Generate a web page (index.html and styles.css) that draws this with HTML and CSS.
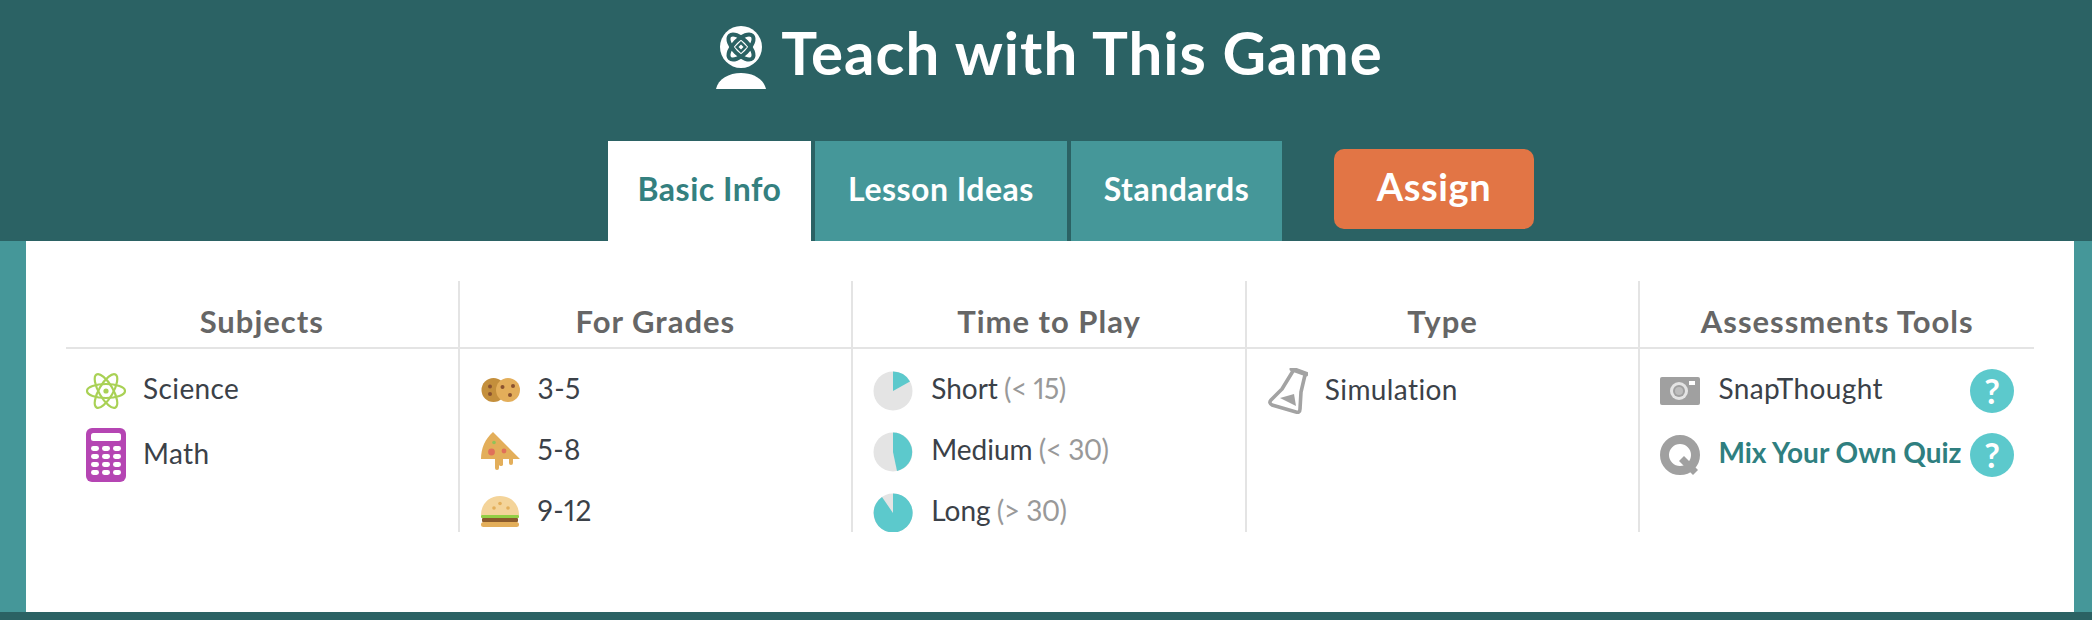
FILE: index.html
```html
<!DOCTYPE html>
<html lang="en">
<head>
  <meta charset="UTF-8">
  <title>Teach with This Game</title>
  <link rel="stylesheet" href="styles.css">
</head>
<body>
  <header class="top">
    <h1 class="title">
      <svg class="logo" viewBox="0 0 50 60">
        <circle cx="25" cy="18" r="21" fill="#fff"/>
        <g fill="none" stroke="#2b6264" stroke-width="4">
          <ellipse cx="25" cy="18" rx="16" ry="7.5" transform="rotate(45 25 18)"/>
          <ellipse cx="25" cy="18" rx="16" ry="7.5" transform="rotate(-45 25 18)"/>
        </g>
        <path d="M25 12l6 6-6 6-6-6z" fill="#2b6264"/>
        <path d="M25 15.500l2.500 2.500-2.500 2.500-2.500-2.500z" fill="#fff"/>
        <path d="M0 60C2 50 13 44 25 44s23 6 25 16z" fill="#fff"/>
      </svg>
      Teach with This Game
    </h1>
    <nav class="tabs">
      <a class="tab active">Basic Info</a>
      <a class="tab tab-lesson">Lesson Ideas</a>
      <a class="tab tab-standards">Standards</a>
      <a class="assign">Assign</a>
    </nav>
  </header>

  <div class="band">
    <main class="panel">
      <section class="col">
        <h2>Subjects</h2>
        <ul>
          <li>
            <svg class="ico" viewBox="0 0 40 40" fill="none" stroke="#a9d155" stroke-width="2.2">
              <ellipse cx="20" cy="20" rx="19" ry="7"/>
              <ellipse cx="20" cy="20" rx="19" ry="7" transform="rotate(60 20 20)"/>
              <ellipse cx="20" cy="20" rx="19" ry="7" transform="rotate(-60 20 20)"/>
              <circle cx="20" cy="20" r="2.6" fill="#a9d155" stroke="none"/>
            </svg>
            <span>Science</span>
          </li>
          <li class="row-math">
            <svg class="ico ico-tall" viewBox="0 0 40 54">
              <rect width="40" height="54" rx="6" fill="#b545b3"/>
              <rect x="5" y="5" width="30" height="8" rx="2.5" fill="#fff"/>
              <g fill="#fff">
                <rect x="5" y="18" width="8" height="5" rx="2.4"/><rect x="16" y="18" width="8" height="5" rx="2.4"/><rect x="27" y="18" width="8" height="5" rx="2.4"/>
                <rect x="5" y="26" width="8" height="5" rx="2.4"/><rect x="16" y="26" width="8" height="5" rx="2.4"/><rect x="27" y="26" width="8" height="5" rx="2.4"/>
                <rect x="5" y="34" width="8" height="5" rx="2.4"/><rect x="16" y="34" width="8" height="5" rx="2.4"/><rect x="27" y="34" width="8" height="5" rx="2.4"/>
                <rect x="5" y="42" width="8" height="5" rx="2.4"/><rect x="16" y="42" width="8" height="5" rx="2.4"/><rect x="27" y="42" width="8" height="5" rx="2.4"/>
              </g>
            </svg>
            <span>Math</span>
          </li>
        </ul>
      </section>

      <section class="col">
        <h2>For Grades</h2>
        <ul>
          <li>
            <svg class="ico" viewBox="0 0 40 40">
              <circle cx="12.5" cy="19" r="12" fill="#c48f3c"/>
              <circle cx="27" cy="19" r="12" fill="#e3ae5a"/>
              <g fill="#8a5230">
                <circle cx="9" cy="15.500" r="2"/><circle cx="9" cy="23" r="2"/>
                <circle cx="21.500" cy="16" r="2"/><circle cx="32" cy="15" r="2"/><circle cx="29" cy="24" r="2"/>
              </g>
            </svg>
            <span>3-5</span>
          </li>
          <li>
            <svg class="ico" viewBox="0 0 40 40">
              <path d="M12 0L39 27H32v4a2 2 0 0 1-4 0v-4h-6v6a2 2 0 0 1-2 1 2 2 0 0 1-2-1v-3l-2-3H0C0 16 4 7 12 0z" fill="#e3ae5a"/>
              <path d="M14 27h4v9a2 2 0 0 1-4 0z" fill="#e3ae5a"/>
              <circle cx="10.500" cy="20" r="3.400" fill="#e0705a"/>
              <circle cx="23" cy="19" r="2.400" fill="#e0705a"/>
              <circle cx="13" cy="10.500" r="1.800" fill="#8fc35a"/>
            </svg>
            <span>5-8</span>
          </li>
          <li>
            <svg class="ico" viewBox="0 0 40 40">
              <path d="M0 22C0 11 8 3 19 3s19 8 19 19z" fill="#f4d49a"/>
              <g fill="#e3ae5a"><circle cx="13" cy="15" r="1.800"/><circle cx="19" cy="10.500" r="1.800"/><circle cx="27" cy="15" r="1.800"/></g>
              <rect y="22" width="38" height="3" rx="1" fill="#93cf45"/>
              <rect x="1" y="25" width="36" height="4" rx="1" fill="#8a5a2c"/>
              <rect y="29" width="38" height="5" rx="2.500" fill="#e3ae5a"/>
            </svg>
            <span>9-12</span>
          </li>
        </ul>
      </section>

      <section class="col col-time">
        <h2>Time to Play</h2>
        <ul>
          <li>
            <svg class="ico" viewBox="0 0 40 40">
              <circle cx="20" cy="20" r="19.500" fill="#e4e4e4"/>
              <path d="M20 20V.5A19.500 19.500 0 0 1 37 10.500z" fill="#5cc9cc"/>
            </svg>
            <span>Short <em>(&lt; 15)</em></span>
          </li>
          <li>
            <svg class="ico" viewBox="0 0 40 40">
              <circle cx="20" cy="20" r="19.500" fill="#e4e4e4"/>
              <path d="M20 20V.5A19.500 19.500 0 0 1 24 39z" fill="#5cc9cc"/>
            </svg>
            <span>Medium <em>(&lt; 30)</em></span>
          </li>
          <li>
            <svg class="ico" viewBox="0 0 40 40">
              <circle cx="20" cy="20" r="19.500" fill="#e4e4e4"/>
              <path d="M20 20V.5A19.500 19.500 0 1 1 9 4z" fill="#5cc9cc"/>
            </svg>
            <span>Long <em>(&gt; 30)</em></span>
          </li>
        </ul>
      </section>

      <section class="col">
        <h2>Type</h2>
        <ul>
          <li class="row-type">
            <svg class="ico" viewBox="0 0 40 46">
              <path d="M25 3L14 21 3 32c-2 2-1 4 1 5l24 7c2 1 4 0 4-3l1-17 4-17" fill="none" stroke="#a3a3a3" stroke-width="3.600" stroke-linejoin="round"/>
              <path d="M24 1l14 5" stroke="#a3a3a3" stroke-width="5" stroke-linecap="round"/>
              <path d="M12 30l14-4 2 12z" fill="#a3a3a3"/>
            </svg>
            <span>Simulation</span>
          </li>
        </ul>
      </section>

      <section class="col col-tools">
        <h2>Assessments Tools</h2>
        <ul>
          <li>
            <svg class="ico" viewBox="0 0 40 40">
              <rect y="6" width="40" height="28" rx="2" fill="#a0a0a0"/>
              <circle cx="19" cy="20" r="9" fill="#e4e4e4"/>
              <circle cx="19" cy="20" r="6" fill="#a0a0a0"/>
              <circle cx="19" cy="20" r="4" fill="#bdbdbd"/>
              <rect x="29" y="10" width="6" height="4" fill="#fff"/>
            </svg>
            <span>SnapThought</span>
            <b class="help">?</b>
          </li>
          <li>
            <svg class="ico" viewBox="0 0 40 40">
              <circle cx="20" cy="20" r="15.500" fill="none" stroke="#a0a0a0" stroke-width="9"/>
              <path d="M19 26l5-5 14 14-5 5z" fill="#a0a0a0"/>
            </svg>
            <span class="quiz">Mix Your Own Quiz</span>
            <b class="help">?</b>
          </li>
        </ul>
      </section>
    </main>
  </div>
</body>
</html>
```

FILE: styles.css
```css
/* page */
* {
  box-sizing: border-box;
}
body {
  margin: 0;
  height: 620px;
  overflow: hidden;
  background-color: #2b6264;
  font-family: 'Lato', 'Liberation Sans', sans-serif;
  font-variant-numeric: proportional-nums;
  color: #3b4148;
}

/* header */
.top {
  height: 241px;
}
.title {
  display: flex;
  justify-content: center;
  align-items: center;
  gap: 15px;
  height: 141px;
  margin: 0;
  padding: 0 0 37px 7px;
  font-size: 60px;
  font-weight: 700;
  letter-spacing: 1px;
  color: #fff;
}
.logo {
  width: 50px;
  height: 60px;
  overflow: visible;
  margin-top: 13px;
}
.tabs {
  display: flex;
  justify-content: center;
  gap: 4px;
  height: 100px;
  padding-left: 50px;
}
.tab {
  width: 203px;
  height: 100px;
  padding-bottom: 5px;
  line-height: 95px;
  text-align: center;
  font-size: 32px;
  font-weight: 700;
  letter-spacing: 0.5px;
  color: #fff;
  background-color: #459799;
}
.tab-lesson {
  width: 252px;
}
.tab-standards {
  width: 211px;
}
.tab.active {
  background-color: #fff;
  color: #34807f;
}
.assign {
  width: 200px;
  height: 80px;
  margin: 8px 0 0 48px;
  line-height: 74px;
  text-align: center;
  font-size: 38px;
  font-weight: 700;
  letter-spacing: 0.6px;
  color: #fff;
  background-color: #e27545;
  border-radius: 10px;
}

/* panel */
.band {
  height: 371px;
  padding: 0 18px 0 26px;
  background-color: #459799;
}
.panel {
  display: grid;
  grid-template-columns: repeat(5, 1fr);
  height: 100%;
  padding: 40px;
  background-color: #fff;
}
.col {
  height: 251px;
  border-right: 2px solid #e4e4e4;
  overflow: hidden;
}
.col:last-child {
  border-right: none;
}
.col h2 {
  margin: 0;
  height: 68px;
  padding-top: 21px;
  line-height: 38px;
  text-align: center;
  font-size: 31px;
  font-weight: 700;
  letter-spacing: 1px;
  color: #666;
  border-bottom: 2px solid #e4e4e4;
}
.col ul {
  list-style: none;
  margin: 0;
  padding: 22px 20px 0 21px;
}
.col:first-child ul {
  padding-left: 20px;
}
.col li {
  display: flex;
  align-items: center;
  min-height: 40px;
  margin-bottom: 21px;
  font-size: 28px;
  line-height: 30px;
  letter-spacing: 0.4px;
}
.col li span {
  padding-bottom: 7px;
}
.ico {
  flex: none;
  width: 40px;
  height: 40px;
  margin-right: 17px;
}
.ico-tall {
  height: 54px;
}
.col em {
  margin-left: -1px;
  font-style: normal;
  letter-spacing: -0.5px;
  color: #999;
}
.row-math {
  margin-top: -4px;
}
.col .row-math span {
  padding-bottom: 4px;
}
.row-type .ico {
  height: 46px;
  margin-top: -3px;
}
.col-time ul {
  padding-left: 20px;
}
.col-time li {
  letter-spacing: 0;
}
.col-time .ico {
  margin-right: 18px;
}
.col-tools ul {
  padding: 20px 20px 0;
}
.col-tools .ico {
  margin-right: 18px;
}
.col-tools li {
  margin-bottom: 20px;
}
.col .quiz {
  font-weight: 700;
  letter-spacing: 0;
  color: #2f7f80;
  white-space: nowrap;
}
.help {
  flex: none;
  width: 44px;
  height: 44px;
  margin-left: auto;
  border-radius: 50%;
  background-color: #5cc9cc;
  color: #fff;
  font-size: 34px;
  line-height: 44px;
  text-align: center;
  letter-spacing: 0;
}
```
